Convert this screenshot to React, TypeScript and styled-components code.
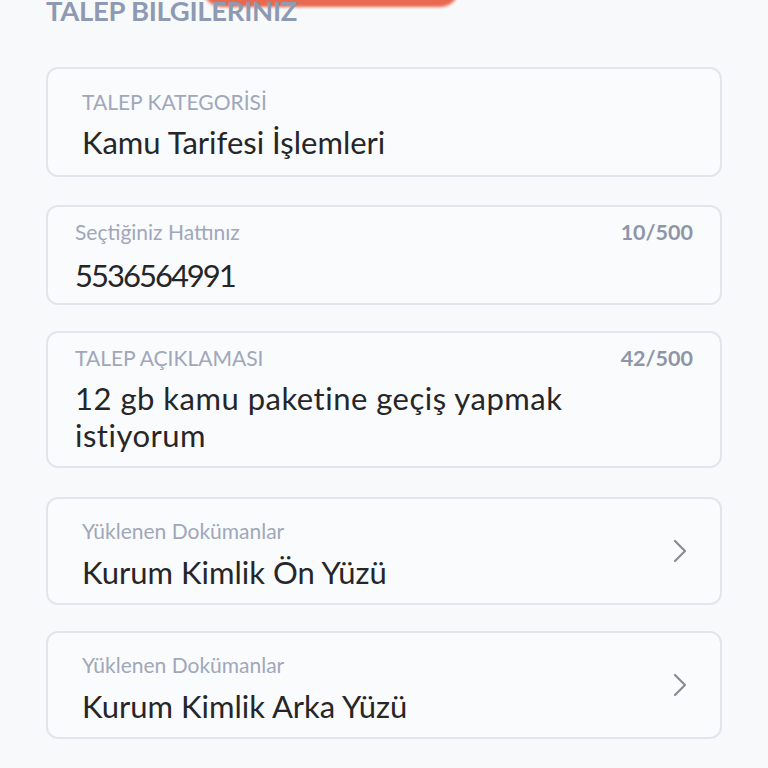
import React from "react";
import styled, { createGlobalStyle } from "styled-components";

const GlobalStyle = createGlobalStyle`
  html, body {
    margin: 0;
    padding: 0;
    background: #f8f9fb;
  }
  body {
    font-family: "Lato", "Noto Sans", sans-serif;
    -webkit-font-smoothing: antialiased;
  }
`;

const Page = styled.div`
  position: relative;
  width: 768px;
  height: 768px;
  overflow: hidden;
  box-sizing: border-box;
  padding: 0 46px;
  background: #f8f9fb;
`;

const AccentPill = styled.div`
  position: absolute;
  top: -30px;
  left: 203px;
  width: 256px;
  height: 37px;
  border-radius: 20px;
  background: #e8694f;
  filter: blur(1.5px);
`;

const SectionTitle = styled.h2`
  position: relative;
  margin: -3px 0 0 0;
  font-family: "Lato", sans-serif;
  font-weight: 700;
  font-size: 27.5px;
  line-height: 28px;
  color: #8e99b2;
  letter-spacing: -0.3px;
`;

const CardList = styled.div`
  display: flex;
  flex-direction: column;
  margin-top: 42px;
`;

const Card = styled.div<{ $mt: number; $pt: number; $pl: number; $pr: number; $pb: number }>`
  display: flex;
  align-items: center;
  box-sizing: border-box;
  margin-top: ${(p) => p.$mt}px;
  border: 2px solid #e2e5ec;
  border-radius: 12px;
  background: #fafbfc;
  padding: ${(p) => p.$pt}px ${(p) => p.$pr}px ${(p) => p.$pb}px ${(p) => p.$pl}px;
`;

const CardBody = styled.div`
  flex: 1;
  min-width: 0;
  display: flex;
  flex-direction: column;
`;

const LabelRow = styled.div<{ $gap: number }>`
  display: flex;
  justify-content: space-between;
  align-items: baseline;
  margin-bottom: ${(p) => p.$gap}px;
`;

const Label = styled.span`
  font-size: 21px;
  line-height: 24px;
  color: #a0a7ba;
`;

const Counter = styled.span`
  font-size: 21.5px;
  line-height: 24px;
  font-weight: 700;
  color: #8e95a8;
`;

const Value = styled.div<{ $tracking: number }>`
  font-size: 31px;
  line-height: 37px;
  color: #262628;
  letter-spacing: ${(p) => p.$tracking}px;
`;

const Chevron = styled.svg`
  display: block;
  flex: none;
  align-self: center;
  width: 14px;
  height: 24px;
  margin: 0 0 9px 16px;
`;

type Item = {
  label: string;
  value: React.ReactNode;
  counter?: string;
  chevron?: boolean;
  tracking?: number;
  mt: number;
  pt: number;
  pl: number;
  pr: number;
  pb: number;
  gap: number;
};

const items: Item[] = [
  { label: "TALEP KATEGORİSİ", value: "Kamu Tarifesi İşlemleri", mt: 0, pt: 21, pl: 34, pr: 27, pb: 14, gap: 10 },
  {
    label: "Seçtiğiniz Hattınız",
    value: "5536564991",
    counter: "10/500",
    tracking: -2,
    mt: 28,
    pt: 13,
    pl: 27,
    pr: 27,
    pb: 9,
    gap: 13,
  },
  {
    label: "TALEP AÇIKLAMASI",
    value: (
      <>
        12 gb kamu paketine geçiş yapmak
        <br />
        istiyorum
      </>
    ),
    counter: "42/500",
    tracking: 0.5,
    mt: 26,
    pt: 13,
    pl: 27,
    pr: 27,
    pb: 12,
    gap: 10,
  },
  { label: "Yüklenen Dokümanlar", value: "Kurum Kimlik Ön Yüzü", chevron: true, mt: 29, pt: 20, pl: 34, pr: 33, pb: 12, gap: 11 },
  { label: "Yüklenen Dokümanlar", value: "Kurum Kimlik Arka Yüzü", chevron: true, mt: 26, pt: 20, pl: 34, pr: 33, pb: 12, gap: 11 },
];

export default function App() {
  return (
    <>
      <GlobalStyle />
      <Page>
        <AccentPill />
        <SectionTitle>TALEP BILGILERINIZ</SectionTitle>
        <CardList>
          {items.map((it, i) => (
            <Card key={i} $mt={it.mt} $pt={it.pt} $pl={it.pl} $pr={it.pr} $pb={it.pb}>
              <CardBody>
                <LabelRow $gap={it.gap}>
                  <Label>{it.label}</Label>
                  {it.counter && <Counter>{it.counter}</Counter>}
                </LabelRow>
                <Value $tracking={it.tracking ?? 0}>{it.value}</Value>
              </CardBody>
              {it.chevron && (
                <Chevron viewBox="0 0 14 24" fill="none">
                  <polyline points="2,2 12,12 2,22" stroke="#8a8b8f" strokeWidth="2.2" strokeLinecap="round" strokeLinejoin="round" />
                </Chevron>
              )}
            </Card>
          ))}
        </CardList>
      </Page>
    </>
  );
}
